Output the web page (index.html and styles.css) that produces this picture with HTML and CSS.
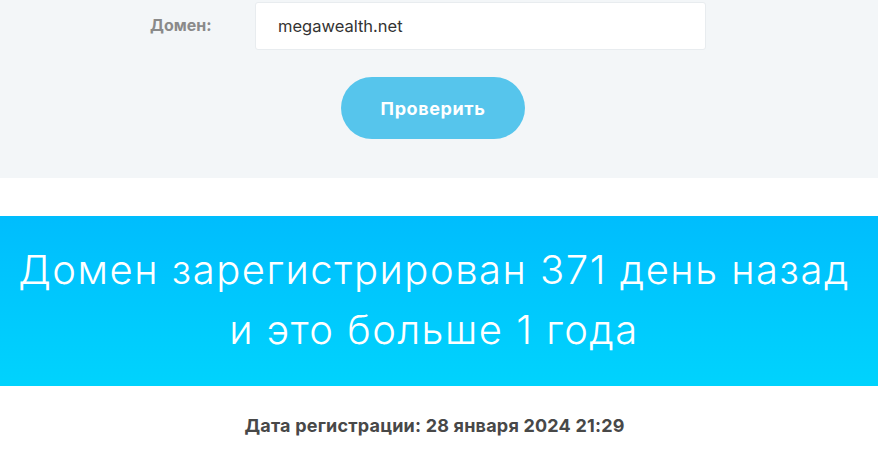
FILE: index.html
```html
<!DOCTYPE html>
<html lang="ru">
<head>
    <meta charset="UTF-8">
    <meta name="viewport" content="width=device-width, initial-scale=1.0">
    <title>Проверка возраста домена</title>
    <link rel="stylesheet" href="styles.css">
</head>
<body>

<div class="check">
    <form class="check-form" onsubmit="return false">
        <div class="form-row">
            <label for="domain">Домен:</label>
            <input type="text" id="domain" value="megawealth.net">
        </div>
        <button type="submit" class="btn">Проверить</button>
    </form>
</div>

<div class="banner">
    <p>Домен зарегистрирован 371 день назад<br>и это больше 1 года</p>
</div>

<div class="reg-date">Дата регистрации: 28 января 2024 21:29</div>

</body>
</html>
```

FILE: styles.css
```css
body {
    font-family: Inter, "Noto Sans", sans-serif;
    margin: 0;
    background-color: #fff;
    color: #333;
}
.check {
    background-color: #f3f6f8;
    height: 178px;
    box-sizing: border-box;
    padding: 2px 12px 0 0;
}
.check-form {
    display: flex;
    flex-direction: column;
    align-items: center;
}
.form-row {
    display: flex;
    align-items: center;
    margin-right: 10px;
}
.form-row label {
    width: 105px;
    font-size: 16px;
    font-weight: 700;
    color: #8a8a8a;
    margin-top: -3px;
}
.form-row input {
    width: 451px;
    height: 48px;
    box-sizing: border-box;
    border: 1px solid #e8ecef;
    border-radius: 3px;
    background: #fff;
    padding: 0 22px;
    font-family: Inter, sans-serif;
    font-size: 16.5px;
    color: #333;
    outline: none;
}
.btn {
    margin-top: 27px;
    width: 184px;
    height: 62px;
    border: none;
    border-radius: 31px;
    background-color: #56c5ec;
    color: #fff;
    font-family: Inter, sans-serif;
    font-size: 18px;
    font-weight: 700;
    letter-spacing: 0.6px;
    cursor: pointer;
}
.banner {
    margin-top: 38px;
    height: 170px;
    box-sizing: border-box;
    padding: 24px 10px 0 0;
    background: linear-gradient(#00bdfd, #00d3fd);
    text-align: center;
}
.banner p {
    margin: 0;
    font-size: 40px;
    font-weight: 300;
    letter-spacing: 1.5px;
    line-height: 60px;
    color: #fff;
}
.reg-date {
    margin-top: 29px;
    padding-right: 9px;
    text-align: center;
    font-size: 18px;
    font-weight: 700;
    letter-spacing: 0.2px;
    color: #484848;
}
```
